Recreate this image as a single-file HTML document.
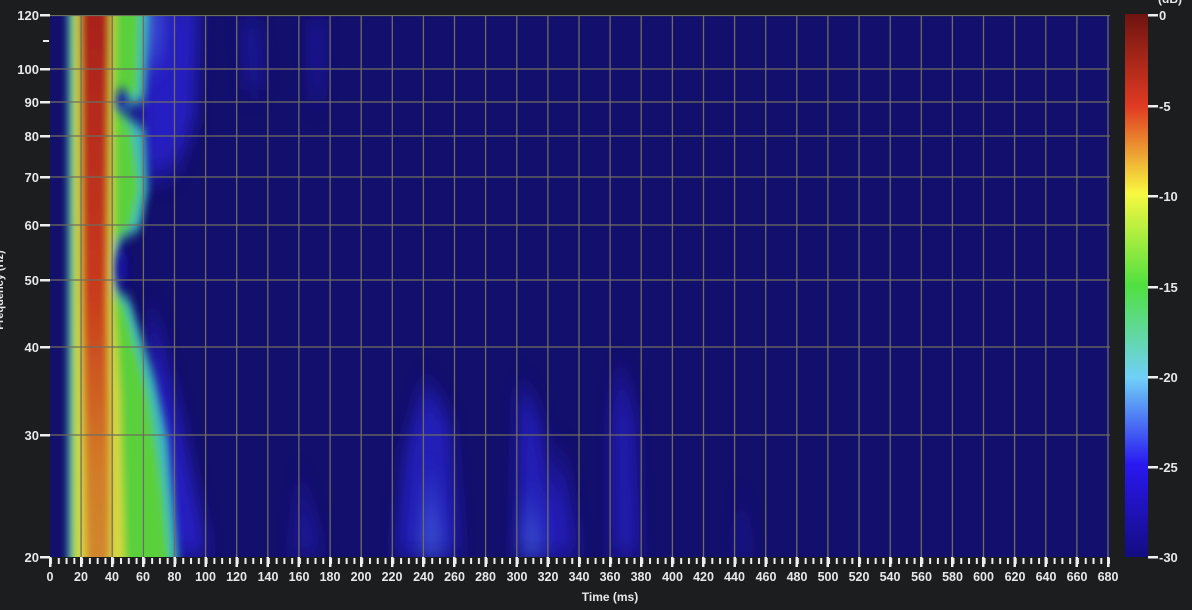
<!DOCTYPE html>
<html><head><meta charset="utf-8"><style>
html,body{margin:0;padding:0;background:#1c1d1e;width:1192px;height:610px;overflow:hidden}
svg{display:block}
text{font-family:"Liberation Sans",sans-serif;fill:#e8e8e8;font-weight:bold}
</style></head><body>
<svg width="1192" height="610" viewBox="0 0 1192 610">
<defs>
<filter id="b" x="-50%" y="-10%" width="200%" height="120%"><feGaussianBlur stdDeviation="4 6"/></filter>
<filter id="b2" x="-50%" y="-10%" width="200%" height="120%"><feGaussianBlur stdDeviation="8 14"/></filter>
<clipPath id="c"><rect x="50" y="15" width="1060" height="542"/></clipPath>
<linearGradient id="red" x1="0" y1="0" x2="0" y2="1">
<stop offset="0" stop-color="#a8201a"/><stop offset="0.5" stop-color="#c83a1c"/><stop offset="0.8" stop-color="#d27a28"/><stop offset="1" stop-color="#d08a30"/></linearGradient>
<linearGradient id="cb" x1="0" y1="0" x2="0" y2="1">
<stop offset="0" stop-color="#6e1410"/><stop offset="0.17" stop-color="#e03a22"/><stop offset="0.33" stop-color="#f8f840"/><stop offset="0.5" stop-color="#50e040"/><stop offset="0.67" stop-color="#70d0f8"/><stop offset="0.83" stop-color="#2818f0"/><stop offset="1" stop-color="#140c80"/></linearGradient>
<pattern id="mt" x="50" y="0" width="7.78" height="20" patternUnits="userSpaceOnUse"><rect x="0" y="0" width="2" height="20" fill="#eee"/></pattern>
</defs>
<rect x="50" y="15" width="1060" height="542" fill="#130f6c"/>
<g clip-path="url(#c)">
<g filter="url(#b2)" fill="#2a22d0" opacity="0.85">
<polygon points="135,0 200,0 195,120 175,170 140,180"/>
<polygon points="150,300 180,420 210,557 150,557"/>
<polygon points="240,20 260,20 265,90 245,90" opacity="0.5"/>
<polygon points="310,20 325,20 322,100 312,100" opacity="0.6"/>
<polygon points="425,380 450,420 460,557 395,557 405,450" opacity="0.9"/>
<polygon points="520,380 540,420 560,557 515,557" opacity="0.9"/>
<polygon points="560,440 580,557 545,557" opacity="0.8"/>
<polygon points="620,360 635,420 640,557 612,557 612,420" opacity="0.8"/>
<polygon points="300,470 325,557 290,557" opacity="0.5"/>
<polygon points="740,490 752,557 735,557" opacity="0.5"/>
</g>
<g filter="url(#b2)" fill="#4a70e0" opacity="0.6">
<polygon points="430,470 445,557 418,557"/>
<polygon points="530,490 545,557 520,557"/>
<polygon points="140,0 165,0 160,60 140,70"/>
</g>
<g filter="url(#b)">
<polygon points="68,0 150,0 145,100 120,110 145,130 148,190 140,230 120,240 118,290 130,300 155,380 168,440 180,580 68,580" fill="#3cb8c0"/>
<polygon points="70,0 140,0 138,95 115,100 132,130 140,190 130,230 115,240 113,290 125,305 150,400 162,480 172,580 70,580" fill="#5ad03c"/>
<polygon points="74,0 115,0 114,100 114,300 120,400 125,580 74,580" fill="#d8d840"/>
<polygon points="80,0 110,0 108,300 110,480 110,580 86,580 82,300" fill="url(#red)"/>
<polygon points="68,0 72,0 72,580 68,580" fill="#40c0c0"/>
<polygon points="72,0 76,0 76,580 72,580" fill="#90d830"/>
</g>
<g filter="url(#b)" fill="#1208a0">
<ellipse cx="122" cy="100" rx="6" ry="10"/>
<ellipse cx="122" cy="268" rx="6" ry="18"/>
</g>
<g stroke="#6e6e60" stroke-width="1.3">
<line x1="50" y1="69" x2="1110" y2="69"/><line x1="50" y1="102" x2="1110" y2="102"/>
<line x1="50" y1="136" x2="1110" y2="136"/><line x1="50" y1="177" x2="1110" y2="177"/>
<line x1="50" y1="225" x2="1110" y2="225"/><line x1="50" y1="280" x2="1110" y2="280"/>
<line x1="50" y1="347" x2="1110" y2="347"/><line x1="50" y1="435" x2="1110" y2="435"/>
<line x1="50" y1="15.5" x2="1110" y2="15.5"/>
</g>
<g stroke="#6e6e60" stroke-width="1.3">
<line x1="81.1" y1="15" x2="81.1" y2="557"/><line x1="112.2" y1="15" x2="112.2" y2="557"/><line x1="143.4" y1="15" x2="143.4" y2="557"/><line x1="174.5" y1="15" x2="174.5" y2="557"/><line x1="205.6" y1="15" x2="205.6" y2="557"/><line x1="236.7" y1="15" x2="236.7" y2="557"/><line x1="267.8" y1="15" x2="267.8" y2="557"/><line x1="298.9" y1="15" x2="298.9" y2="557"/><line x1="330.1" y1="15" x2="330.1" y2="557"/><line x1="361.2" y1="15" x2="361.2" y2="557"/><line x1="392.3" y1="15" x2="392.3" y2="557"/><line x1="423.4" y1="15" x2="423.4" y2="557"/><line x1="454.5" y1="15" x2="454.5" y2="557"/><line x1="485.6" y1="15" x2="485.6" y2="557"/><line x1="516.8" y1="15" x2="516.8" y2="557"/><line x1="547.9" y1="15" x2="547.9" y2="557"/><line x1="579" y1="15" x2="579" y2="557"/><line x1="610.1" y1="15" x2="610.1" y2="557"/><line x1="641.2" y1="15" x2="641.2" y2="557"/><line x1="672.4" y1="15" x2="672.4" y2="557"/><line x1="703.5" y1="15" x2="703.5" y2="557"/><line x1="734.6" y1="15" x2="734.6" y2="557"/><line x1="765.7" y1="15" x2="765.7" y2="557"/><line x1="796.8" y1="15" x2="796.8" y2="557"/><line x1="827.9" y1="15" x2="827.9" y2="557"/><line x1="859.1" y1="15" x2="859.1" y2="557"/><line x1="890.2" y1="15" x2="890.2" y2="557"/><line x1="921.3" y1="15" x2="921.3" y2="557"/><line x1="952.4" y1="15" x2="952.4" y2="557"/><line x1="983.5" y1="15" x2="983.5" y2="557"/><line x1="1014.6" y1="15" x2="1014.6" y2="557"/><line x1="1045.8" y1="15" x2="1045.8" y2="557"/><line x1="1076.9" y1="15" x2="1076.9" y2="557"/><line x1="1108" y1="15" x2="1108" y2="557"/>
</g>
</g>
<g fill="#eee">
<rect x="40" y="14" width="10" height="2.5"/><rect x="43" y="40" width="6" height="2"/>
<rect x="40" y="68" width="10" height="2.5"/><rect x="40" y="101" width="10" height="2.5"/>
<rect x="40" y="135" width="10" height="2.5"/><rect x="40" y="176" width="10" height="2.5"/>
<rect x="40" y="224" width="10" height="2.5"/><rect x="40" y="279" width="10" height="2.5"/>
<rect x="40" y="346" width="10" height="2.5"/><rect x="40" y="434" width="10" height="2.5"/>
<rect x="40" y="556" width="10" height="2.5"/>
<rect x="49" y="557" width="2.5" height="10"/>
</g>
<g font-size="13" text-anchor="end">
<text x="39" y="20">120</text><text x="39" y="74">100</text><text x="39" y="107">90</text>
<text x="39" y="141">80</text><text x="39" y="182">70</text><text x="39" y="230">60</text>
<text x="39" y="285">50</text><text x="39" y="352">40</text><text x="39" y="440">30</text>
<text x="39" y="562">20</text>
</g>
<text x="3" y="290" font-size="11" transform="rotate(-90 3 290)" text-anchor="middle">Frequency (Hz)</text>
<rect x="50" y="558" width="1060" height="6" fill="url(#mt)"/>
<g fill="#eee">
<rect x="80" y="557" width="2.5" height="10"/><rect x="111" y="557" width="2.5" height="10"/><rect x="142" y="557" width="2.5" height="10"/><rect x="173.5" y="557" width="2.5" height="10"/><rect x="204.5" y="557" width="2.5" height="10"/><rect x="235.5" y="557" width="2.5" height="10"/><rect x="266.5" y="557" width="2.5" height="10"/><rect x="297.5" y="557" width="2.5" height="10"/><rect x="329" y="557" width="2.5" height="10"/><rect x="360" y="557" width="2.5" height="10"/><rect x="391" y="557" width="2.5" height="10"/><rect x="422" y="557" width="2.5" height="10"/><rect x="453" y="557" width="2.5" height="10"/><rect x="484.5" y="557" width="2.5" height="10"/><rect x="515.5" y="557" width="2.5" height="10"/><rect x="546.5" y="557" width="2.5" height="10"/><rect x="578" y="557" width="2.5" height="10"/><rect x="609" y="557" width="2.5" height="10"/><rect x="640" y="557" width="2.5" height="10"/><rect x="671" y="557" width="2.5" height="10"/><rect x="702" y="557" width="2.5" height="10"/><rect x="733.5" y="557" width="2.5" height="10"/><rect x="764.5" y="557" width="2.5" height="10"/><rect x="795.5" y="557" width="2.5" height="10"/><rect x="826.5" y="557" width="2.5" height="10"/><rect x="858" y="557" width="2.5" height="10"/><rect x="889" y="557" width="2.5" height="10"/><rect x="920" y="557" width="2.5" height="10"/><rect x="951" y="557" width="2.5" height="10"/><rect x="982" y="557" width="2.5" height="10"/><rect x="1013.5" y="557" width="2.5" height="10"/><rect x="1044.5" y="557" width="2.5" height="10"/><rect x="1075.5" y="557" width="2.5" height="10"/><rect x="1107" y="557" width="2.5" height="10"/>
</g>
<g font-size="12.5" text-anchor="middle">
<text x="50" y="581">0</text><text x="81" y="581">20</text><text x="112" y="581">40</text><text x="143" y="581">60</text><text x="174.5" y="581">80</text><text x="205.5" y="581">100</text><text x="236.5" y="581">120</text><text x="268" y="581">140</text><text x="299" y="581">160</text><text x="330" y="581">180</text><text x="361" y="581">200</text><text x="392" y="581">220</text><text x="423.5" y="581">240</text><text x="454.5" y="581">260</text><text x="485.5" y="581">280</text><text x="517" y="581">300</text><text x="548" y="581">320</text><text x="579" y="581">340</text><text x="610" y="581">360</text><text x="641" y="581">380</text><text x="672.5" y="581">400</text><text x="703.5" y="581">420</text><text x="734.5" y="581">440</text><text x="766" y="581">460</text><text x="797" y="581">480</text><text x="828" y="581">500</text><text x="859" y="581">520</text><text x="890" y="581">540</text><text x="921.5" y="581">560</text><text x="952.5" y="581">580</text><text x="983.5" y="581">600</text><text x="1015" y="581">620</text><text x="1046" y="581">640</text><text x="1077" y="581">660</text><text x="1108" y="581">680</text>
</g>
<text x="610" y="601" font-size="12" text-anchor="middle">Time (ms)</text>
<rect x="1125" y="14" width="23" height="543" fill="url(#cb)"/>
<g fill="#eee">
<rect x="1148" y="14" width="10" height="2.5"/><rect x="1148" y="105" width="10" height="2.5"/><rect x="1148" y="195" width="10" height="2.5"/><rect x="1148" y="286" width="10" height="2.5"/><rect x="1148" y="376" width="10" height="2.5"/><rect x="1148" y="466" width="10" height="2.5"/><rect x="1148" y="556" width="10" height="2.5"/>
</g>
<g font-size="13">
<text x="1159" y="20">0</text><text x="1159" y="111">-5</text><text x="1159" y="201">-10</text><text x="1159" y="292">-15</text><text x="1159" y="382">-20</text><text x="1159" y="472">-25</text><text x="1159" y="562">-30</text>
</g>
<text x="1158" y="3" font-size="12">(dB)</text>
</svg>
</body></html>
